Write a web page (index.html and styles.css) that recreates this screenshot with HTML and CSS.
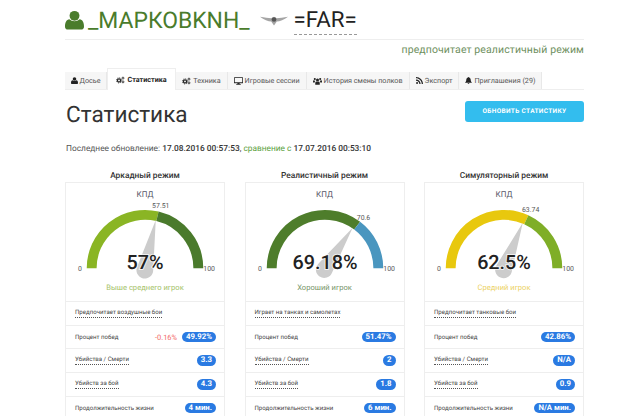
FILE: index.html
```html
<html>
<head>
  <title>Статистика</title>
  <link rel="stylesheet" href="styles.css">
</head>
<body>
<svg class="defs" width="0" height="0">
  <symbol id="i-user" viewBox="0 0 20 20">
    <circle cx="10" cy="5.6" r="5.2"/>
    <path d="M0 17C0 12.5 1.6 9.6 4.6 9.3 6 10.6 7.9 11.3 10 11.3S14 10.6 15.4 9.3C18.4 9.6 20 12.5 20 17 20 18.9 18.8 20 17 20H3C1.200 20 0 18.900 0 17Z"/>
  </symbol>
  <symbol id="i-cogs" viewBox="0 0 12 10">
    <circle cx="4" cy="5.500" r="2.100" fill="none" stroke="currentColor" stroke-width="1.700"/>
    <circle cx="4" cy="5.500" r="3.500" fill="none" stroke="currentColor" stroke-width="1.100" stroke-dasharray="1.300 1.450"/>
    <circle cx="9.300" cy="2.500" r="1.300" fill="none" stroke="currentColor" stroke-width="1.100"/>
    <circle cx="9.300" cy="7.500" r="1.300" fill="none" stroke="currentColor" stroke-width="1.100"/>
  </symbol>
  <symbol id="i-desktop" viewBox="0 0 12 10">
    <path d="M0.500 0H11.500Q12 0 12 .5V7.500Q12 8 11.500 8H7.500V9H9V10H3V9H4.500V8H.5Q0 8 0 7.500V.5Q0 0 .5 0ZM1 1V6.800H11V1Z"/>
  </symbol>
  <symbol id="i-users" viewBox="0 0 12 10">
    <circle cx="6" cy="3.600" r="2"/>
    <circle cx="2.400" cy="2.400" r="1.400"/>
    <circle cx="9.600" cy="2.400" r="1.400"/>
    <path d="M3 10V7.500Q3 5.800 4.500 5.500 6 6.500 7.500 5.500 9 5.800 9 7.500V10ZM0 7V5.500Q0 4 1.200 4 2 4.800 3.200 4.500 2.300 5.500 2.300 7ZM12 7V5.500Q12 4 10.800 4 10 4.800 8.800 4.500 9.700 5.500 9.700 7Z"/>
  </symbol>
  <symbol id="i-rss" viewBox="0 0 10 10">
    <circle cx="1.500" cy="8.500" r="1.400"/>
    <path d="M0 3.400V5.200C2.700 5.200 4.800 7.300 4.800 10H6.600C6.600 6.300 3.700 3.400 0 3.400ZM0 0V1.800C4.500 1.800 8.200 5.500 8.200 10H10C10 4.500 5.500 0 0 0Z"/>
  </symbol>
  <symbol id="i-bell" viewBox="0 0 10 10">
    <path d="M5 0Q5.600 0 5.700 .8C7.500 1.200 8.200 2.600 8.200 4.400 8.200 6.200 8.800 7 10 8.200H0C1.200 7 1.800 6.200 1.800 4.400 1.800 2.600 2.500 1.200 4.300 .8 4.400 0 5 0 5 0ZM3.800 8.800H6.200Q6 10 5 10T3.800 8.800Z"/>
  </symbol>
</svg>

<div class="wrap">
  <div class="player">
    <svg class="player-icon"><use href="#i-user"/></svg>
    <span class="player-name">_МАРКОВKNH_</span>
    <svg class="wings" viewBox="0 0 30 14">
      <path d="M0 3.500C5 4 9 5 12 5L15 3.500 18 5C21 5 25 4 30 3.500 26 7 21 8.500 18 8.500L15 13 12 8.500C9 8.500 4 7 0 3.500Z"/>
      <circle cx="15" cy="6.500" r="2.500" class="wings-mid"/>
    </svg>
    <span class="player-clan">=FAR=</span>
  </div>
  <div class="prefers">предпочитает реалистичный режим</div>

  <div class="tabs">
    <div class="tab tab-profile"><svg class="ico ico-small"><use href="#i-user"/></svg>Досье</div>
    <div class="tab tab-active"><svg class="ico"><use href="#i-cogs"/></svg>Статистика</div>
    <div class="tab"><svg class="ico"><use href="#i-cogs"/></svg>Техника</div>
    <div class="tab"><svg class="ico"><use href="#i-desktop"/></svg>Игровые сессии</div>
    <div class="tab"><svg class="ico"><use href="#i-users"/></svg>История смены полков</div>
    <div class="tab"><svg class="ico ico-small"><use href="#i-rss"/></svg>Экспорт</div>
    <div class="tab"><svg class="ico ico-small"><use href="#i-bell"/></svg>Приглашения (29)</div>
  </div>

  <div class="title-row">
    <h1>Статистика</h1>
    <div class="button">ОБНОВИТЬ СТАТИСТИКУ</div>
  </div>

  <div class="updated">Последнее обновление: <b>17.08.2016 00:57:53</b>, <span class="green">сравнение с</span> <b>17.07.2016 00:53:10</b></div>

  <div class="columns">
    <div class="col">
      <div class="col-title">Аркадный режим</div>
      <div class="card">
        <div class="gauge-box">
          <div class="gauge-title">КПД</div>
          <svg class="gauge" viewBox="0 0 160 82">
            <path class="arc" stroke="#8ab524" d="M26 69A54 54 0 0 1 92.620 16.500"/>
            <path class="arc" stroke="#4a7a2c" d="M92.620 16.500A54 54 0 0 1 134 69"/>
            <path class="needle" d="M72.200 67.300L90.900 20.200 88.300 70.700A8.500 8.500 0 1 1 72.200 67.300Z"/>
            <text class="lim" x="14" y="72" text-anchor="middle">0</text>
            <text class="lim" x="145" y="72" text-anchor="middle">100</text>
            <text class="lim" x="96" y="8" text-anchor="middle">57.51</text>
            <text class="big" x="80" y="69.500" text-anchor="middle">57%</text>
          </svg>
          <div class="gauge-sub sub-light">Выше среднего игрок</div>
        </div>
        <div class="row"><span class="dotted">Предпочитает воздушные бои</span></div>
        <div class="row"><span>Процент побед</span><span class="right"><span class="neg">-0.16%</span><span class="pill">49.92%</span></span></div>
        <div class="row"><span class="dotted">Убийства / Смерти</span><span class="pill">3.3</span></div>
        <div class="row"><span class="dotted">Убийств за бой</span><span class="pill">4.3</span></div>
        <div class="row"><span>Продолжительность жизни</span><span class="pill">4 мин.</span></div>
      </div>
    </div>

    <div class="col">
      <div class="col-title">Реалистичный режим</div>
      <div class="card">
        <div class="gauge-box">
          <div class="gauge-title">КПД</div>
          <svg class="gauge" viewBox="0 0 160 82">
            <path class="arc" stroke="#4e7d2b" d="M26 69A54 54 0 0 1 112.570 25.930"/>
            <path class="arc" stroke="#4a96bf" d="M112.570 25.930A54 54 0 0 1 134 69"/>
            <path class="needle" d="M73.500 64.200L108 28 87.200 73.500A8.500 8.500 0 1 1 73.500 64.200Z"/>
            <text class="lim" x="14" y="72" text-anchor="middle">0</text>
            <text class="lim" x="145" y="72" text-anchor="middle">100</text>
            <text class="lim" x="119" y="20" text-anchor="middle">70.6</text>
            <text class="big" x="80" y="69.500" text-anchor="middle">69.18%</text>
          </svg>
          <div class="gauge-sub sub-dark">Хороший игрок</div>
        </div>
        <div class="row"><span class="dotted">Играет на танках и самолетах</span></div>
        <div class="row"><span>Процент побед</span><span class="pill">51.47%</span></div>
        <div class="row"><span class="dotted">Убийства / Смерти</span><span class="pill">2</span></div>
        <div class="row"><span class="dotted">Убийств за бой</span><span class="pill">1.8</span></div>
        <div class="row"><span>Продолжительность жизни</span><span class="pill">6 мин.</span></div>
      </div>
    </div>

    <div class="col">
      <div class="col-title">Симуляторный режим</div>
      <div class="card">
        <div class="gauge-box">
          <div class="gauge-title">КПД</div>
          <svg class="gauge" viewBox="0 0 160 82">
            <path class="arc" stroke="#e8c80e" d="M26 69A54 54 0 0 1 102.590 19.950"/>
            <path class="arc" stroke="#7fae27" d="M102.590 19.950A54 54 0 0 1 134 69"/>
            <path class="needle" d="M72.600 65.800L99 23 88 71.800A8.500 8.500 0 1 1 72.600 65.800Z"/>
            <text class="lim" x="14" y="72" text-anchor="middle">0</text>
            <text class="lim" x="145" y="72" text-anchor="middle">100</text>
            <text class="lim" x="107" y="12" text-anchor="middle">63.74</text>
            <text class="big" x="80" y="69.500" text-anchor="middle">62.5%</text>
          </svg>
          <div class="gauge-sub sub-yellow">Средний игрок</div>
        </div>
        <div class="row"><span class="dotted">Предпочитает танковые бои</span></div>
        <div class="row"><span>Процент побед</span><span class="pill">42.86%</span></div>
        <div class="row"><span class="dotted">Убийства / Смерти</span><span class="pill">N/A</span></div>
        <div class="row"><span class="dotted">Убийств за бой</span><span class="pill">0.9</span></div>
        <div class="row"><span>Продолжительность жизни</span><span class="pill">N/A мин.</span></div>
      </div>
    </div>
  </div>
</div>
</body>
</html>
```

FILE: styles.css
```css
html, body{
    margin:0;
    height:416px;
    overflow:hidden;
    background:#fff;
}

body{
    font-family:Roboto,"Liberation Sans",sans-serif;
    color:#444;
    text-rendering:geometricPrecision;
}

.defs{
    position:absolute;
}

.wrap{
    width:519px;
    margin-left:65px;
}

/* player header */
.player{
    display:flex;
    align-items:center;
    height:39px;
    border-bottom:1px solid #eee;
}
.player-icon{
    width:19px;
    height:20px;
    fill:#4a7c2c;
    margin-right:4px;
    margin-top:1px;
}
.player-name{
    font-size:22.900px;
    line-height:39px;
    color:#4a7c2c;
    margin-top:1px;
}
.wings{
    width:28px;
    height:14px;
    margin-left:10px;
    margin-right:6px;
    fill:#a5a5a5;
}
.wings-mid{
    fill:#555;
}
.player-clan{
    font-size:22.300px;
    line-height:27px;
    height:27px;
    color:#222;
    border-bottom:1px dashed #999;
    margin-top:2px;
}
.prefers{
    text-align:right;
    font-size:10.500px;
    letter-spacing:.1px;
    color:#6e8f5e;
    line-height:13px;
    padding-top:3px;
}

/* tabs */
.tabs{
    display:flex;
    align-items:flex-end;
    height:20px;
    margin-top:13px;
    border-bottom:1px solid #eee;
}
.tab{
    display:flex;
    align-items:center;
    justify-content:center;
    height:17px;
    padding:0 6px;
    font-size:7.200px;
    color:#555;
    background:#f6f6f6;
    border-right:1px solid #e8e8e8;
    white-space:nowrap;
}
.tab-profile{
    padding:0 5.500px;
}
.tab-active{
    height:21px;
    margin-bottom:-1px;
    padding:0 8.500px;
    background:#fff;
    color:#222;
    font-weight:700;
    border:1px solid #eee;
    border-bottom:none;
}
.ico{
    width:9px;
    height:8px;
    margin-right:2px;
    fill:#222;
    color:#222;
    flex:none;
}
.ico-small{
    width:7px;
    height:7px;
}

/* title */
.title-row{
    display:flex;
    align-items:flex-start;
    justify-content:space-between;
    margin-top:11px;
    height:28px;
}
h1{
    margin:0 0 0 1px;
    font-size:22.600px;
    line-height:28px;
    font-weight:400;
    color:#333;
}
.button{
    width:119px;
    height:21px;
    line-height:21px;
    text-align:center;
    background:#33bdee;
    border-radius:3px;
    color:#fff;
    font-size:6.500px;
    font-weight:700;
    letter-spacing:.35px;
}
.updated{
    margin:14px 0 0 1px;
    font-size:8.350px;
    line-height:12px;
    color:#555;
}
.updated b{
    font-weight:500;
    color:#333;
}
.green{
    color:#5aa03c;
}

/* columns */
.columns{
    display:flex;
    justify-content:space-between;
    margin-top:15px;
}
.col{
    width:160px;
}
.col-title{
    text-align:center;
    font-size:8.350px;
    line-height:12px;
    font-weight:500;
    color:#333;
}
.card{
    border:1px solid #eee;
    border-bottom:none;
}
.gauge-box{
    height:118px;
    box-sizing:border-box;
    padding-top:6px;
}
.gauge-title{
    text-align:center;
    font-size:8px;
    line-height:11px;
    color:#556;
}
.gauge{
    display:block;
    width:158px;
    height:81px;
}
.arc{
    fill:none;
    stroke-width:10;
}
.needle{
    fill:#ccc;
}
.lim{
    font-size:7px;
    fill:#555;
}
.big{
    font-size:20px;
    font-weight:500;
    fill:#222;
    paint-order:stroke;
    stroke:rgba(255,255,255,.7);
    stroke-width:2px;
}
.gauge-sub{
    text-align:center;
    font-size:7.600px;
    line-height:10px;
    margin-top:2px;
}
.sub-light{
    color:#a5c36a;
}
.sub-dark{
    color:#78966a;
}
.sub-yellow{
    color:#ecd265;
}

/* rows */
.row{
    display:flex;
    align-items:center;
    justify-content:space-between;
    height:23.700px;
    box-sizing:border-box;
    padding:0 8px 0 9px;
    border-top:1px solid #eee;
    font-size:6.100px;
    color:#444;
    white-space:nowrap;
}
.dotted{
    border-bottom:1px dotted #555;
    line-height:8px;
}
.right{
    display:flex;
    align-items:center;
}
.neg{
    color:#f36c6c;
    font-size:7.500px;
    margin-right:5px;
}
.pill{
    background:#2a7ae2;
    color:#fff;
    font-size:7.800px;
    font-weight:700;
    line-height:10.500px;
    padding:0 4px;
    border-radius:6px;
}
```
